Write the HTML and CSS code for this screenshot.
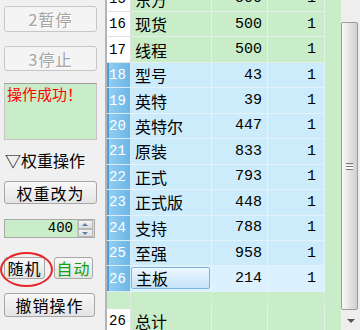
FILE: index.html
```html
<!DOCTYPE html>
<html lang="zh">
<head>
    <meta charset="UTF-8">
    <title>权重</title>
    <link rel="stylesheet" href="styles.css">
</head>
<body>
    <div class="window">
        <div class="side">
            <button class="btn disabled tall">2暂停</button>
            <button class="btn disabled mid gap14">3停止</button>
            <div class="status">操作成功！</div>
            <div class="label">▽权重操作</div>
            <button class="btn weight">权重改为</button>
            <div class="spin">
                <span class="spin-value">400</span>
                <span class="spin-btns">
                    <span class="spin-up"></span>
                    <span class="spin-down"></span>
                </span>
            </div>
            <div class="pair">
                <button class="btn small">随机</button>
                <button class="btn small green">自动</button>
                <div class="ring"></div>
            </div>
            <button class="btn undo">撤销操作</button>
        </div>

        <div class="grid">
            <div class="rows">
                <div class="row green"><span class="hd">15</span><span class="name">东方</span><span class="val">500</span><span class="wt">1</span></div>
                <div class="row green"><span class="hd">16</span><span class="name">现货</span><span class="val">500</span><span class="wt">1</span></div>
                <div class="row green"><span class="hd">17</span><span class="name">线程</span><span class="val">500</span><span class="wt">1</span></div>
                <div class="row sel"><span class="hd">18</span><span class="name">型号</span><span class="val">43</span><span class="wt">1</span></div>
                <div class="row sel"><span class="hd">19</span><span class="name">英特</span><span class="val">39</span><span class="wt">1</span></div>
                <div class="row sel"><span class="hd">20</span><span class="name">英特尔</span><span class="val">447</span><span class="wt">1</span></div>
                <div class="row sel"><span class="hd">21</span><span class="name">原装</span><span class="val">833</span><span class="wt">1</span></div>
                <div class="row sel"><span class="hd">22</span><span class="name">正式</span><span class="val">793</span><span class="wt">1</span></div>
                <div class="row sel"><span class="hd">23</span><span class="name">正式版</span><span class="val">448</span><span class="wt">1</span></div>
                <div class="row sel"><span class="hd">24</span><span class="name">支持</span><span class="val">788</span><span class="wt">1</span></div>
                <div class="row sel"><span class="hd">25</span><span class="name">至强</span><span class="val">958</span><span class="wt">1</span></div>
                <div class="row sel current"><span class="hd">26</span><span class="name"><span class="focus">主板</span></span><span class="val">214</span><span class="wt">1</span></div>
            </div>
            <div class="blank"><span></span><span></span><span></span><span></span></div>
            <div class="row green total"><span class="hd">26</span><span class="name">总计</span><span class="val"></span><span class="wt"></span></div>
        </div>

        <div class="scrollbar">
            <div class="thumb"><span class="grip"></span></div>
            <div class="arrow-down"></div>
        </div>
    </div>
</body>
</html>
```
FILE: styles.css
```css
body {
    margin: 0;
    font-family: "Noto Sans CJK SC", "Liberation Sans", sans-serif;
}

.window {
    display: flex;
    width: 360px;
    height: 330px;
    overflow: hidden;
    background: #f0f0f0;
}

/* left panel */
.side {
    width: 105px;
    flex: none;
    display: flex;
    flex-direction: column;
    align-items: flex-start;
    padding: 6px 0 0 4px;
    box-sizing: border-box;
}

.btn {
    font-family: "Noto Sans CJK SC", sans-serif;
    font-size: 16px;
    line-height: 18px;
    padding: 0;
    color: #000;
    border: 1px solid #a7a7a7;
    border-radius: 3px;
    background: linear-gradient(#f8f8f8, #e4e4e4);
    box-sizing: border-box;
    letter-spacing: 1px;
}

.btn.disabled {
    color: #a3a3a3;
    border-color: #c6c6c6;
    background: #f4f4f4;
    text-shadow: 1px 1px 0 #fff;
}

.tall {
    width: 93px;
    height: 26px;
}

.mid {
    width: 93px;
    height: 25px;
}

.gap14 {
    margin-top: 14px;
}

.status {
    margin-top: 12px;
    width: 93px;
    height: 57px;
    box-sizing: border-box;
    border: 1px solid #c4c4c4;
    border-top-color: #a0a0a0;
    background: #c9edc9;
    color: #ff0000;
    font-size: 15px;
    line-height: 18px;
    padding: 1px 0 0 2px;
}

.label {
    margin-top: 11px;
    font-size: 16px;
    line-height: 18px;
    height: 18px;
    padding-left: 1px;
}

.weight {
    margin-top: 12px;
    width: 93px;
    height: 23px;
}

.spin {
    margin-top: 15px;
    width: 91px;
    height: 19px;
    box-sizing: border-box;
    border: 1px solid #a9a9a9;
    background: #c9edc9;
    display: flex;
    align-items: center;
}

.spin-value {
    flex: 1;
    text-align: right;
    font-family: "Liberation Mono", monospace;
    font-size: 14px;
    line-height: 17px;
    padding-right: 4px;
}

.spin-btns {
    width: 15px;
    height: 17px;
    display: flex;
    flex-direction: column;
    border-left: 1px solid #c8c8c8;
    margin-right: 1px;
}

.spin-up,
.spin-down {
    flex: 1;
    background: linear-gradient(#f4f4f4, #dcdcdc);
    border: 1px solid #b8b8b8;
    position: relative;
}

.spin-up::after,
.spin-down::after {
    content: '';
    position: absolute;
    left: 3px;
    top: 2px;
    border-left: 3px solid transparent;
    border-right: 3px solid transparent;
}

.spin-up::after {
    border-bottom: 3px solid #5a7fa8;
}

.spin-down::after {
    border-top: 3px solid #5a7fa8;
}

.pair {
    position: relative;
    margin-top: 19px;
    display: flex;
    gap: 9px;
}

.small {
    width: 41px;
    height: 22px;
}

.small.green {
    width: 39px;
    color: #11a011;
}

.ring {
    position: absolute;
    left: -4px;
    top: -5px;
    width: 53px;
    height: 35px;
    border: 2px solid #e8262a;
    border-radius: 50%;
    box-sizing: border-box;
}

.undo {
    margin-top: 14px;
    width: 91px;
    height: 24px;
}

/* grid */
.grid {
    width: 236px;
    flex: none;
    border-left: 2px solid #b4b4b4;
    box-sizing: border-box;
    background: #c9edc9;
    display: flex;
    flex-direction: column;
}

.rows {
    margin-top: -13.45px;
}

.row {
    display: grid;
    grid-template-columns: 24px 81px 56px 57px;
    height: 25.45px;
}

.row > span {
    display: flex;
    align-items: center;
    border-right: 1px solid #e6f0e6;
    border-bottom: 1px solid #e6f0e6;
    box-sizing: border-box;
    overflow: hidden;
    white-space: nowrap;
}

.hd {
    font-family: "Liberation Mono", monospace;
    font-size: 14px;
    padding-left: 2px;
    background: #fff;
}

.name {
    font-size: 16px;
    padding-left: 4px;
}

.val,
.wt {
    justify-content: flex-end;
    font-family: "Liberation Mono", monospace;
    font-size: 15px;
}

.val {
    padding-right: 5px;
}

.wt {
    padding-right: 8px;
}

.green > span {
    background: #c9edc9;
}

.green > .hd {
    background: #fff;
    border-color: #e2e2e2;
}

.sel > span {
    background: #ccecfc;
    border-color: #e4f2fb;
}

.sel > .hd {
    color: #fff;
    background: linear-gradient(to right, #4d9fd9 0, #4d9fd9 2px, #92cdf1 2px, #6ab6e6 100%);
    border-color: #d8ecf8;
}

.current > span {
    background: #dbf1fe;
}

.current > .name {
    padding: 1px 1px 2px 0;
}

.focus {
    display: flex;
    align-items: center;
    width: 100%;
    height: 100%;
    box-sizing: border-box;
    padding-left: 4px;
    border: 1px solid #7eb2e0;
    border-radius: 2px;
    background: linear-gradient(#eef8ff, #c4e2f8);
}

.blank {
    display: grid;
    grid-template-columns: 24px 81px 56px 57px;
    height: 17px;
    flex: none;
}

.blank > span {
    border-right: 1px solid #dcecdc;
}

.total {
    flex: none;
}

/* scrollbar */
.scrollbar {
    width: 19px;
    flex: none;
    background: #eeeeee;
    display: flex;
    flex-direction: column;
    align-items: flex-start;
}

.thumb {
    margin-top: 22px;
    width: 17px;
    height: 288px;
    box-sizing: border-box;
    border: 1px solid #9c9c9c;
    border-radius: 2px;
    background: linear-gradient(to right, #fafafa, #e6e6e6 45%, #cfcfcf);
    display: flex;
    align-items: center;
    justify-content: center;
}

.grip {
    width: 7px;
    height: 5px;
    border-top: 1px solid #777;
    border-bottom: 1px solid #777;
    background: linear-gradient(#fff 0, #fff 1px, #777 1px, #777 2px, #fff 2px);
    background-size: 100% 4px;
    background-repeat: no-repeat;
    background-position: 0 1px;
}

.arrow-down {
    margin: 9px 0 0 6px;
    border-left: 4px solid transparent;
    border-right: 4px solid transparent;
    border-top: 4px solid #555;
}
```
